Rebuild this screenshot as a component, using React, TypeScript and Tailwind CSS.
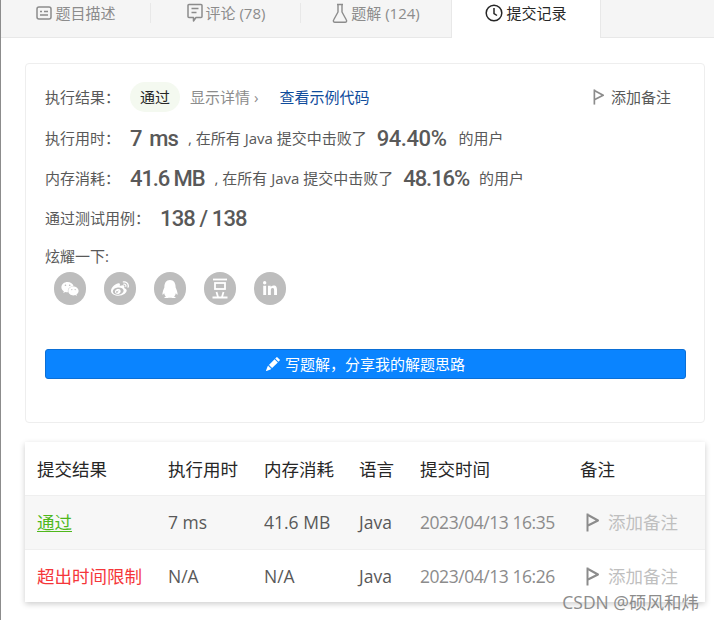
import { ReactNode } from "react";
import { FaWeixin, FaWeibo, FaQq, FaLinkedinIn } from "react-icons/fa";
import { BsPencilFill } from "react-icons/bs";

const SANS = "font-['Open_Sans','Noto_Sans_CJK_SC',sans-serif]";

/* ---------- ICONS ---------- */
function FlagIcon({ className }: { className?: string }) {
  return (
    <svg viewBox="0 0 14 19" className={className} fill="none" stroke="currentColor" strokeWidth="2">
      <path d="M1.5 0.5v18" />
      <path d="M2 2l10 5.5L2 12.5" strokeLinejoin="round" />
    </svg>
  );
}

function DescIcon() {
  return (
    <svg viewBox="0 0 16 16" className="h-4 w-4" fill="none" stroke="currentColor" strokeWidth="1.5">
      <rect x="1" y="2" width="14" height="12" rx="2" />
      <path d="M4 6.5h2M8 6.5h4M4 10h8" />
    </svg>
  );
}

function CommentIcon() {
  return (
    <svg viewBox="0 0 16 20" className="h-5 w-4" fill="none" stroke="currentColor" strokeWidth="1.5">
      <path d="M2 1.5h12a1 1 0 0 1 1 1v11a1 1 0 0 1-1 1H9l-2.5 3.5v-3.5H2a1 1 0 0 1-1-1v-11a1 1 0 0 1 1-1z" strokeLinejoin="round" />
      <path d="M4.5 5.5h7M4.5 9.5h5" />
    </svg>
  );
}

function FlaskIcon() {
  return (
    <svg viewBox="0 0 16 21" className="h-[21px] w-4" fill="none" stroke="currentColor" strokeWidth="1.4">
      <path d="M5 1.5h6M6 2v7L1.6 17a1.5 1.5 0 0 0 1.3 2.3h10.2a1.5 1.5 0 0 0 1.3-2.3L10 9V2" strokeLinejoin="round" />
    </svg>
  );
}

function ClockIcon() {
  return (
    <svg viewBox="0 0 18 18" className="h-[18px] w-[18px]" fill="none" stroke="currentColor" strokeWidth="1.5">
      <circle cx="9" cy="9" r="7.8" />
      <path d="M9 4v5.5l3 2" />
    </svg>
  );
}

function DoubanIcon() {
  return (
    <svg viewBox="0 0 16 21" className="h-[21px] w-4" fill="none" stroke="currentColor" strokeWidth="1.8">
      <path d="M1 1.5h14" />
      <rect x="3" y="5" width="10" height="6" />
      <path d="M0.5 19.5h15M4.5 14l1.5 5M11.5 14l-1.5 5" />
    </svg>
  );
}

/* ---------- TABS ---------- */
function Tab({ icon, label, active, divider }: { icon: ReactNode; label: string; active?: boolean; divider?: boolean }) {
  return (
    <div
      className={`relative flex h-[38px] w-[150px] items-start justify-center gap-[3px] pt-[4px] text-[15px] ${
        active ? "border-x border-[#e8e8e8] bg-white text-[#262626]" : "text-[#8c8c8c]"
      }`}
    >
      <span className="flex h-[18px] items-center">{icon}</span>
      <span className="leading-[18px]">{label}</span>
      {divider && <span className="absolute right-0 top-[3px] h-5 w-px bg-[#e8e8e8]" />}
    </div>
  );
}

/* ---------- STATS ---------- */
function Big({ children, className }: { children: ReactNode; className?: string }) {
  return (
    <span className={`font-['Roboto'] text-[22px] font-medium text-[#595959] ${className ?? "tracking-[-0.04em]"}`}>
      {children}
    </span>
  );
}

function Row({ label, children }: { label: string; children: ReactNode }) {
  return (
    <div className="flex h-10 items-center text-[15px] text-[#595959]">
      <span>{label}</span>
      {children}
    </div>
  );
}

/* ---------- TABLE ---------- */
const colClass = ["w-[131px]", "w-[96px]", "w-[95px]", "w-[61px]", "w-[160px]", "w-[125px]"];

function NoteCell() {
  return (
    <div className="flex items-center gap-2 pl-[6px]">
      <FlagIcon className="h-[19px] w-[14px] text-[#8c8c8c]" />
      <span className="text-[#bfbfbf]">添加备注</span>
    </div>
  );
}

function SubmitRow({ status, color, underline, time, mem, date, shaded }: {
  status: string;
  color: string;
  underline?: boolean;
  time: string;
  mem: string;
  date: string;
  shaded?: boolean;
}) {
  return (
    <div className={`flex items-center border-t border-[#efefef] pl-3 text-[17.5px] text-[#595959] ${shaded ? "h-[54px] bg-[#f7f7f7]" : "h-[53px]"}`}>
      <div className={colClass[0]}>
        <span className={`${color} ${underline ? "underline underline-offset-2" : ""}`}>{status}</span>
      </div>
      <div className={colClass[1]}>{time}</div>
      <div className={colClass[2]}>{mem}</div>
      <div className={colClass[3]}>Java</div>
      <div className={`${colClass[4]} tracking-[-0.45px] text-[#8c8c8c]`}>{date}</div>
      <NoteCell />
    </div>
  );
}

export default function App() {
  const socials = [FaWeixin, FaWeibo, FaQq, DoubanIcon, FaLinkedinIn];

  return (
    <div className={`relative h-[620px] w-[714px] overflow-hidden border-l border-[#8c8c8c] bg-white ${SANS}`}>
      {/* TABS */}
      <div className="flex h-[38px] border-b border-[#e8e8e8] bg-[#f5f5f5]">
        <Tab icon={<DescIcon />} label="题目描述" divider />
        <Tab icon={<CommentIcon />} label="评论 (78)" divider />
        <Tab icon={<FlaskIcon />} label="题解 (124)" />
        <Tab icon={<ClockIcon />} label="提交记录" active />
      </div>

      <div className="px-6 pt-[25px]">
        {/* RESULT CARD */}
        <div className="h-[360px] w-[680px] rounded-[4px] border border-[#eeeeee] px-[19px] pt-[13px]">
          <div className="flex h-10 items-center text-[15px]">
            <span className="text-[#595959]">执行结果：</span>
            <span className="ml-[10px] flex h-[30px] items-center rounded-full bg-[#f4f9f0] px-[10px] text-[#262626]">通过</span>
            <span className="ml-[10px] text-[#8c8c8c]">显示详情 ›</span>
            <span className="ml-[21px] text-[#0f4c9c]">查看示例代码</span>
            <span className="ml-auto mr-[14px] flex items-center gap-[6px] text-[#595959]">
              <FlagIcon className="h-4 w-3 text-[#8c8c8c]" />
              添加备注
            </span>
          </div>
          <div className="mt-px">
            <Row label="执行用时：">
              <Big className="ml-[10px] tracking-[-0.04em] [word-spacing:3px]">7 ms</Big>
              <span className="ml-[10px]">, 在所有 Java 提交中击败了</span>
              <Big className="ml-[10px] tracking-[-0.02em]">94.40%</Big>
              <span className="ml-[12px]">的用户</span>
            </Row>
            <Row label="内存消耗：">
              <Big className="ml-[10px] tracking-[-0.05em]">41.6 MB</Big>
              <span className="ml-[10px]">, 在所有 Java 提交中击败了</span>
              <Big className="ml-[10px] tracking-[-0.05em]">48.16%</Big>
              <span className="ml-[10px]">的用户</span>
            </Row>
            <Row label="通过测试用例：">
              <Big className="ml-[10px] tracking-[-0.04em]">138 / 138</Big>
            </Row>
          </div>
          <div className="mt-2 text-[15px] leading-[20px] text-[#595959]">炫耀一下:</div>
          <div className="mt-[6px] flex gap-[18px] pl-[9px]">
            {socials.map((Icon, i) => (
              <div key={i} className="flex h-[33px] w-8 items-center justify-center rounded-full bg-[#bdbdbd] text-white">
                <Icon className={i === 3 ? "" : i === 4 ? "h-4 w-4" : "h-[18px] w-[18px]"} />
              </div>
            ))}
          </div>
          <button className="mt-[44px] flex h-[30px] w-[641px] items-center justify-center gap-[5px] rounded-[3px] border border-[#0b6fd6] bg-[#0a84ff] text-[15px] text-white">
            <BsPencilFill className="h-[14px] w-[14px]" />
            写题解，分享我的解题思路
          </button>
        </div>

        {/* SUBMISSIONS TABLE */}
        <div className="mt-[19px] w-[680px] bg-white shadow-[0_2px_6px_rgba(0,0,0,0.2)]">
          <div className="flex h-[53px] items-center pl-3 pt-[2px] text-[17.5px] text-[#262626]">
            <div className={colClass[0]}>提交结果</div>
            <div className={colClass[1]}>执行用时</div>
            <div className={colClass[2]}>内存消耗</div>
            <div className={colClass[3]}>语言</div>
            <div className={colClass[4]}>提交时间</div>
            <div>备注</div>
          </div>
          <SubmitRow status="通过" color="text-[#4fb81c]" underline time="7 ms" mem="41.6 MB" date="2023/04/13 16:35" shaded />
          <SubmitRow status="超出时间限制" color="text-[#f5363a]" time="N/A" mem="N/A" date="2023/04/13 16:26" />
        </div>
      </div>

      {/* WATERMARK */}
      <div className="absolute bottom-[6px] right-[15px] text-[17.5px] leading-[24px] text-[#8c8c8c]">CSDN @硕风和炜</div>
    </div>
  );
}
